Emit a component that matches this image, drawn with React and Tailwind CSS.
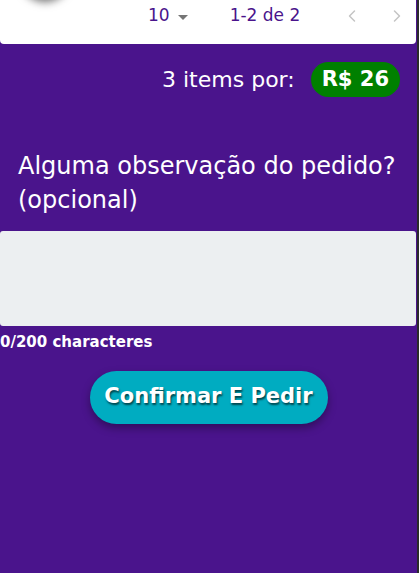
import { ChevronLeft, ChevronRight } from "lucide-react";

const font = { fontFamily: '"DejaVu Sans", "Noto Sans", sans-serif' };

export default function App() {
  return (
    <div className="flex h-[573px] w-[419px] overflow-hidden bg-[#2b2b2b]" style={font}>
      <div className="flex h-full w-[417px] flex-col bg-[#4a148c]">
        {/* card bottom with pagination */}
        <div className="relative h-[44px] w-[416px] rounded-b-[4px] bg-white">
          <div className="absolute left-[20px] top-[-52px] h-[50px] w-[50px] rounded-full bg-white shadow-[0_4px_9px_rgba(0,0,0,0.55)]" />
          <div className="flex h-[32px] items-center pl-[148px] text-[17px] text-[#4a148c]">
            <span>10</span>
            <span className="ml-[8px] mt-[2px] h-0 w-0 border-x-[5px] border-t-[5px] border-x-transparent border-t-[#757575]" />
            <span className="ml-[42px]">1-2 de 2</span>
            <ChevronLeft className="ml-[42px] h-[20px] w-[20px] text-[#c4c4c4]" strokeWidth={1.8} />
            <ChevronRight className="ml-[25px] h-[20px] w-[20px] text-[#c4c4c4]" strokeWidth={1.8} />
          </div>
        </div>

        <div className="mt-[18px] flex items-center justify-end pr-[17px]">
          <span className="text-[22px] text-white">3 items por:</span>
          <span className="ml-[16px] flex h-[35px] items-center rounded-full bg-[#008000] px-[11px] text-[21px] font-bold text-white">
            R$ 26
          </span>
        </div>

        <p className="mt-[52px] px-[18px] text-[24px] leading-[34px] text-white">
          Alguma observação do pedido? (opcional)
        </p>

        <textarea className="mt-[14px] h-[95px] w-[416px] resize-none rounded-[3px] bg-[#eceff1] outline-none" />
        <span className="mt-[5px] text-[15px] font-bold text-white">0/200 characteres</span>

        <div className="mt-[17px] flex justify-center">
          <button className="h-[53px] w-[238px] rounded-full bg-[#00acc1] text-[21px] font-bold text-white shadow-[0_4px_8px_rgba(0,0,0,0.35)] [text-shadow:1px_2px_2px_rgba(0,0,0,0.6)]">
            Confirmar E Pedir
          </button>
        </div>
      </div>
    </div>
  );
}
